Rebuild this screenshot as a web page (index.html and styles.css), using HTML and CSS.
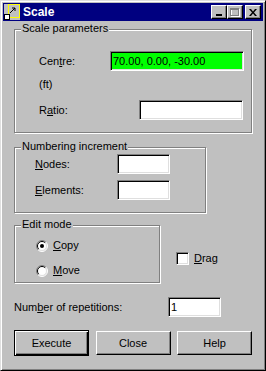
FILE: index.html
```html
<!DOCTYPE html>
<html lang="en">
<head>
    <meta charset="UTF-8">
    <title>Scale</title>
    <link rel="stylesheet" href="styles.css">
</head>
<body>
    <div class="window">
        <div class="titlebar">
            <svg class="app-icon" width="16" height="16" viewBox="0 0 16 16">
                <rect x="0" y="0" width="16" height="16" fill="#c0c0c0"/>
                <rect x="4.5" y="0.5" width="11" height="13" fill="#c0c0c0" stroke="#ffff00"/>
                <path d="M6 9 L11 4 M8 4 H11 V7" stroke="#000" fill="none"/>
                <rect x="0.5" y="10.5" width="5" height="5" fill="#fff" stroke="#000"/>
            </svg>
            <span class="title">Scale</span>
            <span class="tb-btn">
                <svg width="8" height="7" viewBox="0 0 8 7"><rect x="1" y="5" width="6" height="2" fill="#000"/></svg>
            </span>
            <span class="tb-btn">
                <svg width="10" height="9" viewBox="0 0 10 9"><rect x="1.5" y="1.5" width="8" height="7" fill="none" stroke="#fff"/><rect x="0.5" y="0.5" width="8" height="7" fill="none" stroke="#808080"/><rect x="0" y="1" width="9" height="1" fill="#808080"/></svg>
            </span>
            <span class="tb-btn close">
                <svg width="8" height="7" viewBox="0 0 8 7"><path d="M0 0h2l2 2.5 2-2.5h2l-3 3.5 3 3.5h-2l-2-2.5-2 2.5h-2l3-3.5z" fill="#000"/></svg>
            </span>
        </div>

        <div class="content">
            <div class="group scale-group">
                <span class="caption">Scale parameters</span>
                <div class="row">
                    <span>Cen<u>t</u>re:</span>
                    <input class="field centre" type="text" value="70.00, 0.00, -30.00">
                </div>
                <div class="unit">(ft)</div>
                <div class="row ratio-row">
                    <span>R<u>a</u>tio:</span>
                    <input class="field ratio" type="text" value="">
                </div>
            </div>

            <div class="group numbering-group">
                <span class="caption">Numbering increment</span>
                <div class="row">
                    <span class="num-label"><u>N</u>odes:</span>
                    <input class="field small" type="text" value="">
                </div>
                <div class="row elements-row">
                    <span class="num-label"><u>E</u>lements:</span>
                    <input class="field small" type="text" value="">
                </div>
            </div>

            <div class="mode-row">
                <div class="group mode-group">
                    <span class="caption">Edit mode</span>
                    <div class="option">
                        <svg class="radio" width="12" height="12" viewBox="0 0 12 12">
                            <circle cx="6" cy="6" r="5" fill="#fff"/>
                            <path d="M2.1 9.9 A5.5 5.5 0 0 1 9.9 2.1" stroke="#808080" fill="none"/>
                            <path d="M9.9 2.1 A5.5 5.5 0 0 1 2.1 9.9" stroke="#fff" fill="none"/>
                            <path d="M2.8 9.2 A4.5 4.5 0 0 1 9.2 2.8" stroke="#000" fill="none"/>
                            <path d="M9.2 2.8 A4.5 4.5 0 0 1 2.8 9.2" stroke="#dfdfdf" fill="none"/>
                            <circle cx="6" cy="6" r="2" fill="#000"/>
                        </svg>
                        <span><u>C</u>opy</span>
                    </div>
                    <div class="option move">
                        <svg class="radio" width="12" height="12" viewBox="0 0 12 12">
                            <circle cx="6" cy="6" r="5" fill="#fff"/>
                            <path d="M2.1 9.9 A5.5 5.5 0 0 1 9.9 2.1" stroke="#808080" fill="none"/>
                            <path d="M9.9 2.1 A5.5 5.5 0 0 1 2.1 9.9" stroke="#fff" fill="none"/>
                            <path d="M2.8 9.2 A4.5 4.5 0 0 1 9.2 2.8" stroke="#000" fill="none"/>
                            <path d="M9.2 2.8 A4.5 4.5 0 0 1 2.8 9.2" stroke="#dfdfdf" fill="none"/>
                        </svg>
                        <span><u>M</u>ove</span>
                    </div>
                </div>
                <div class="option drag">
                    <span class="checkbox"></span>
                    <span><u>D</u>rag</span>
                </div>
            </div>

            <div class="row reps-row">
                <span class="reps-label">Num<u>b</u>er of repetitions:</span>
                <input class="field small" type="text" value="1">
            </div>

            <div class="buttons">
                <button class="btn default">Execute</button>
                <button class="btn">Close</button>
                <button class="btn">Help</button>
            </div>
        </div>
    </div>
</body>
</html>
```

FILE: styles.css
```css
*{
    margin: 0;
    padding: 0;
}
body{
    font: 11px/13px "Liberation Sans", Arial, sans-serif;
    color: #000;
    background: #c0c0c0;
}
.window{
    width: 266px;
    height: 371px;
    box-sizing: border-box;
    background: #c0c0c0;
    border: 1px solid;
    border-color: #dfdfdf #000 #000 #dfdfdf;
    box-shadow: inset 1px 1px #fff, inset -1px -1px #808080;
    padding: 2px;
}

/* title bar */
.titlebar{
    height: 18px;
    background: #000080;
    color: #fff;
    display: flex;
    align-items: center;
    padding: 0 2px 0 1px;
}
.app-icon{
    display: block;
}
.title{
    flex: 1;
    margin-left: 3px;
    font-weight: bold;
    font-size: 12px;
}
.tb-btn{
    width: 16px;
    height: 14px;
    box-sizing: border-box;
    background: #c0c0c0;
    border: 1px solid;
    border-color: #fff #000 #000 #fff;
    box-shadow: inset -1px -1px #808080;
    display: flex;
    align-items: center;
    justify-content: center;
}
.tb-btn svg{
    display: block;
}
.tb-btn.close{
    margin-left: 2px;
}

/* body of the dialog */
.content{
    padding: 0 11px;
}
.group{
    position: relative;
    border: 1px solid #808080;
    box-shadow: inset 1px 1px #fff, 1px 1px #fff;
}
.caption{
    position: absolute;
    top: -8px;
    left: 6px;
    padding: 0 1px;
    background: #c0c0c0;
    white-space: nowrap;
}
.row{
    display: flex;
    align-items: center;
    justify-content: space-between;
    height: 20px;
}
.field{
    box-sizing: border-box;
    height: 20px;
    background: #fff;
    border: 1px solid;
    border-color: #808080 #fff #fff #808080;
    box-shadow: inset 1px 1px #000, inset -1px -1px #dfdfdf;
    padding: 0 2px;
    font: inherit;
    color: #000;
    outline: none;
}

.scale-group{
    margin-top: 8px;
    padding: 21px 7px 12px 24px;
}
.field.centre{
    width: 134px;
    background: #00ff00;
}
.unit{
    margin-top: 7px;
}
.ratio-row{
    margin-top: 9px;
}
.field.ratio{
    width: 104px;
    margin-right: 1px;
}

.numbering-group{
    width: 192px;
    box-sizing: border-box;
    margin-top: 14px;
    padding: 6px 0 12px 20px;
}
.numbering-group .row{
    justify-content: flex-start;
}
.num-label{
    width: 82px;
}
.elements-row{
    margin-top: 6px;
}
.field.small{
    width: 53px;
}

.mode-row{
    display: flex;
    align-items: flex-start;
    margin-top: 12px;
}
.mode-group{
    width: 146px;
    box-sizing: border-box;
    padding: 13px 0 5px 21px;
}
.option{
    display: flex;
    align-items: center;
    height: 13px;
}
.option.move{
    margin-top: 12px;
}
.radio{
    display: block;
    margin-right: 5px;
}
.drag{
    margin: 27px 0 0 16px;
}
.checkbox{
    width: 13px;
    height: 13px;
    box-sizing: border-box;
    background: #fff;
    border: 1px solid;
    border-color: #808080 #fff #fff #808080;
    box-shadow: inset 1px 1px #000, inset -1px -1px #dfdfdf;
    margin-right: 5px;
}

.reps-row{
    margin-top: 14px;
    justify-content: flex-start;
}
.reps-label{
    width: 154px;
}

.buttons{
    display: flex;
    justify-content: space-between;
    align-items: center;
    margin-top: 13px;
}
.btn{
    width: 75px;
    height: 24px;
    box-sizing: border-box;
    background: #c0c0c0;
    border: 1px solid;
    border-color: #fff #000 #000 #fff;
    box-shadow: inset -1px -1px #808080;
    font: inherit;
    color: #000;
}
.btn.default{
    height: 26px;
    border-color: #000;
    box-shadow: inset 1px 1px #fff, inset -1px -1px #000, inset -2px -2px #808080;
}
```
